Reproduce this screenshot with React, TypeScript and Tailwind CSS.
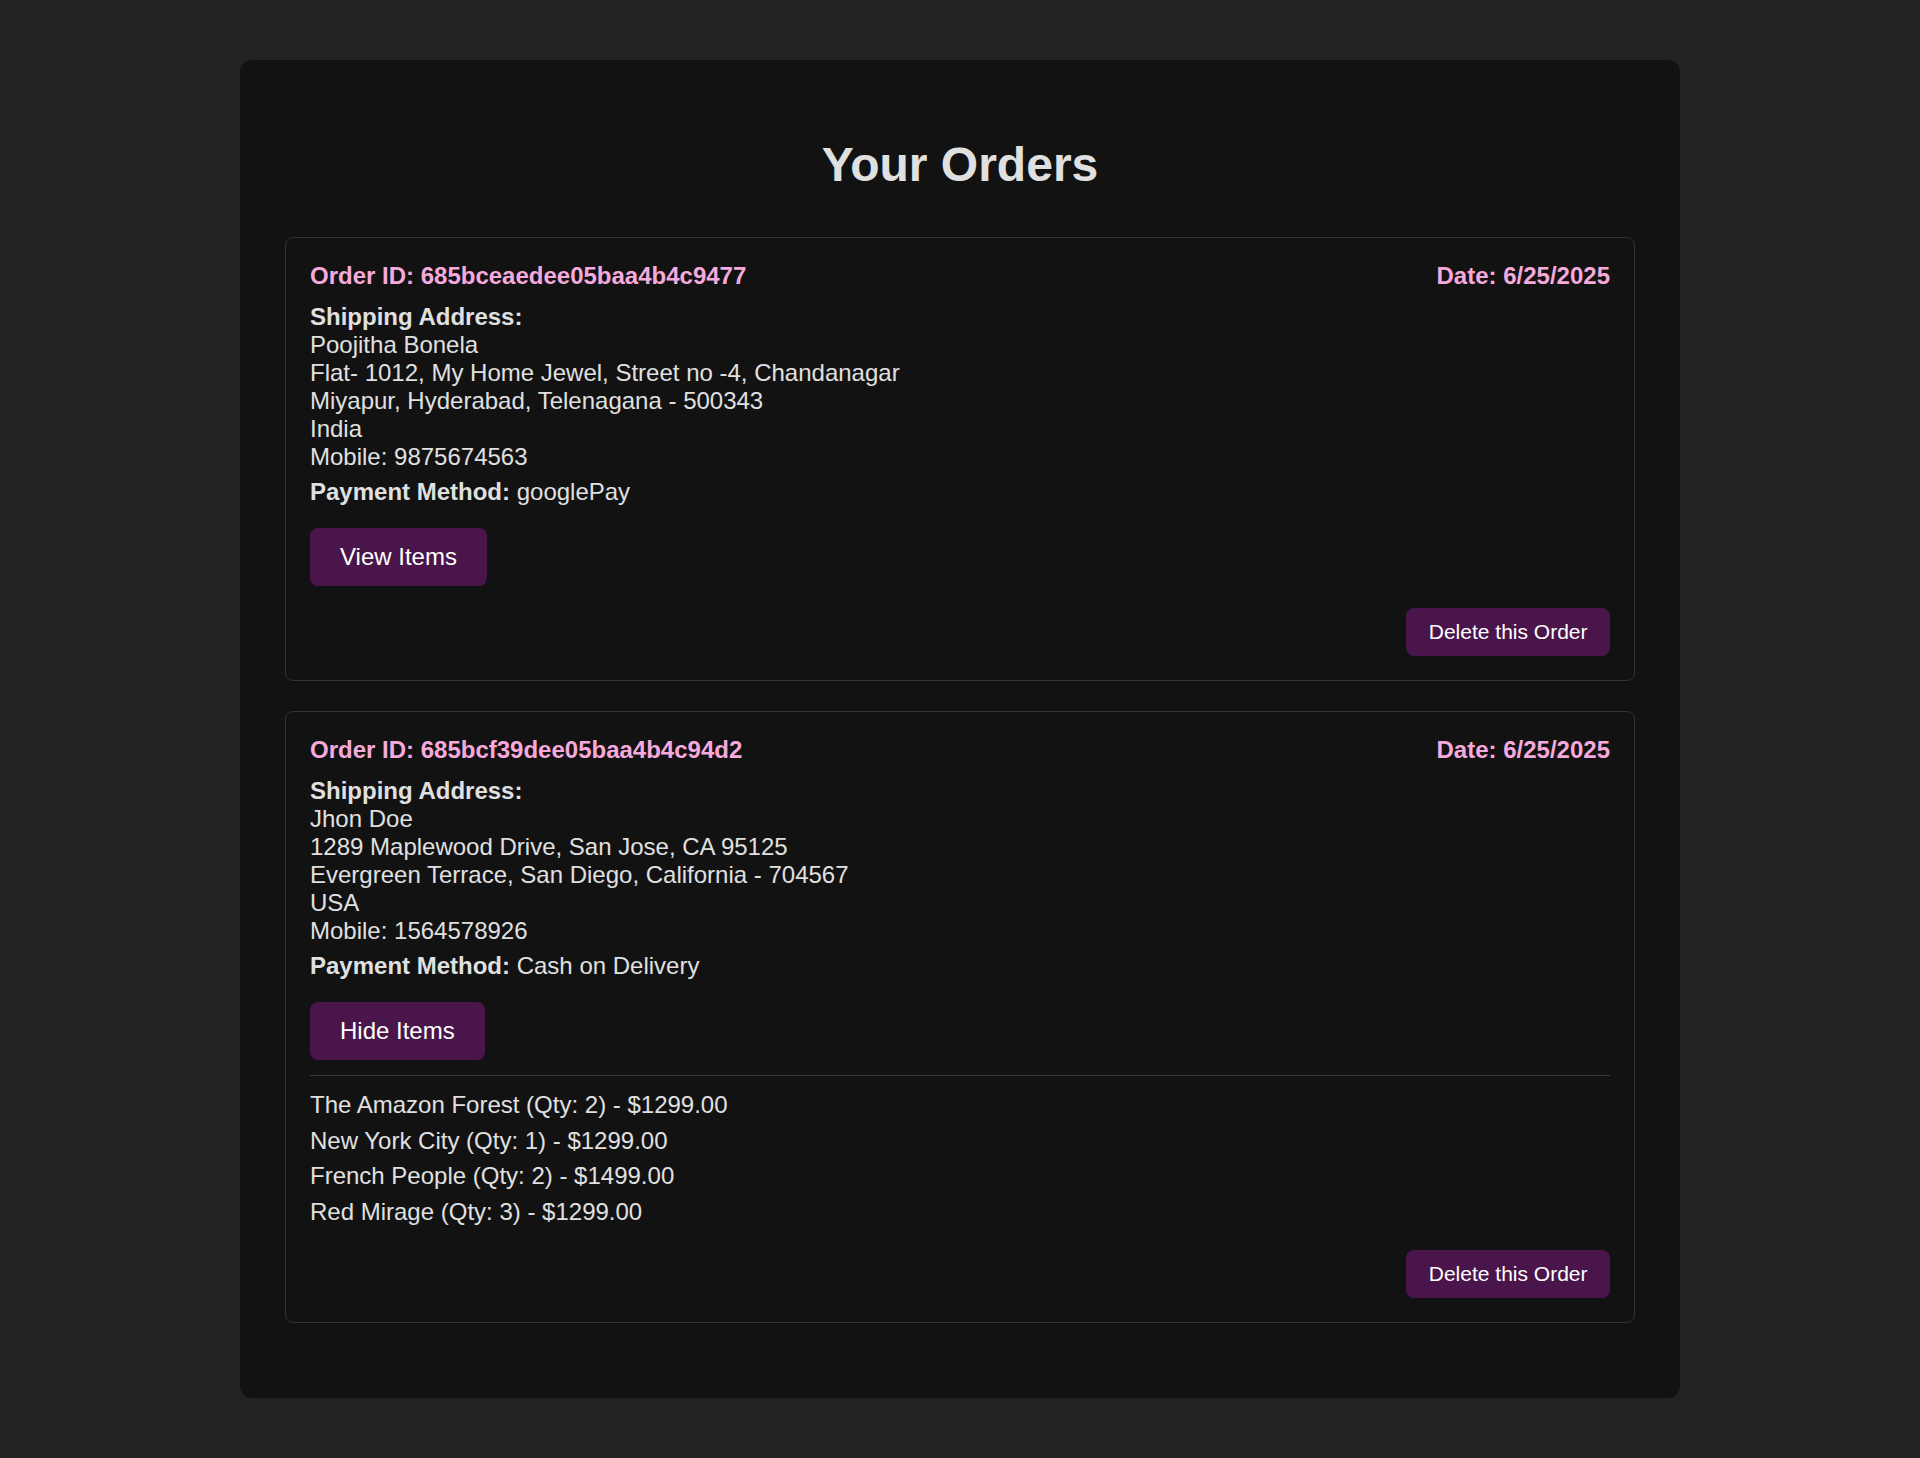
import React from "react";

type Item = { name: string; qty: number; price: string };
type Order = {
  id: string;
  date: string;
  name: string;
  lines: string[];
  mobile: string;
  payment: string;
  open: boolean;
  items: Item[];
};

const orders: Order[] = [
  {
    id: "685bceaedee05baa4b4c9477",
    date: "6/25/2025",
    name: "Poojitha Bonela",
    lines: [
      "Flat- 1012, My Home Jewel, Street no -4, Chandanagar",
      "Miyapur, Hyderabad, Telenagana - 500343",
      "India",
    ],
    mobile: "9875674563",
    payment: "googlePay",
    open: false,
    items: [],
  },
  {
    id: "685bcf39dee05baa4b4c94d2",
    date: "6/25/2025",
    name: "Jhon Doe",
    lines: [
      "1289 Maplewood Drive, San Jose, CA 95125",
      "Evergreen Terrace, San Diego, California - 704567",
      "USA",
    ],
    mobile: "1564578926",
    payment: "Cash on Delivery",
    open: true,
    items: [
      { name: "The Amazon Forest", qty: 2, price: "1299.00" },
      { name: "New York City", qty: 1, price: "1299.00" },
      { name: "French People", qty: 2, price: "1499.00" },
      { name: "Red Mirage", qty: 3, price: "1299.00" },
    ],
  },
];

function OrderCard({ o }: { o: Order }) {
  return (
    <div className="mb-[30px] rounded-[8px] border border-[#333333] bg-[#121212] p-[24px]">
      <div className="mb-[13px] flex items-center justify-between text-[24px] font-bold leading-[normal] text-[#f6aadc]">
        <span>Order ID: {o.id}</span>
        <span>Date: {o.date}</span>
      </div>
      <div className="text-[24px] leading-[normal] text-[#e0e0e0]">
        <strong className="font-bold">Shipping Address:</strong>
        <div>{o.name}</div>
        {o.lines.map((l) => (
          <div key={l}>{l}</div>
        ))}
        <div>Mobile: {o.mobile}</div>
      </div>
      <div className="mt-[6.5px] text-[24px] leading-[normal] text-[#e0e0e0]">
        <strong className="font-bold">Payment Method:</strong> {o.payment}
      </div>
      <div className="mt-[22.5px] flex">
        <button className="rounded-[8px] bg-[#4a154b] px-[30px] py-[15px] text-[24px] leading-[normal] text-white">
          {o.open ? "Hide Items" : "View Items"}
        </button>
      </div>
      {o.open && (
        <div className="mt-[15px] flex flex-col gap-[7.5px] border-t border-[#3a3a3a] pt-[15px] pb-[2px] text-[24px] leading-[normal] text-[#e0e0e0]">
          {o.items.map((it) => (
            <div key={it.name}>
              {it.name} (Qty: {it.qty}) - ${it.price}
            </div>
          ))}
        </div>
      )}
      <div className="mt-[22px] flex justify-end">
        <button className="rounded-[8px] bg-[#4a154b] px-[22.5px] py-[12px] text-[21px] leading-[normal] text-white">
          Delete this Order
        </button>
      </div>
    </div>
  );
}

export default function App() {
  return (
    <div
      className="min-h-[1458px] bg-[#222222] pt-[60px] pb-[61px]"
      style={{ fontFamily: '"Liberation Sans", Arial, sans-serif' }}
    >
      <div className="mx-auto w-[1440px] rounded-[12px] bg-[#121212] px-[45px] pt-[45px] pb-[45px]">
        <h1 className="mt-[32px] mb-[45px] text-center text-[48px] font-bold leading-[normal] text-[#e0e0e0]">
          Your Orders
        </h1>
        {orders.map((o) => (
          <OrderCard key={o.id} o={o} />
        ))}
      </div>
    </div>
  );
}
